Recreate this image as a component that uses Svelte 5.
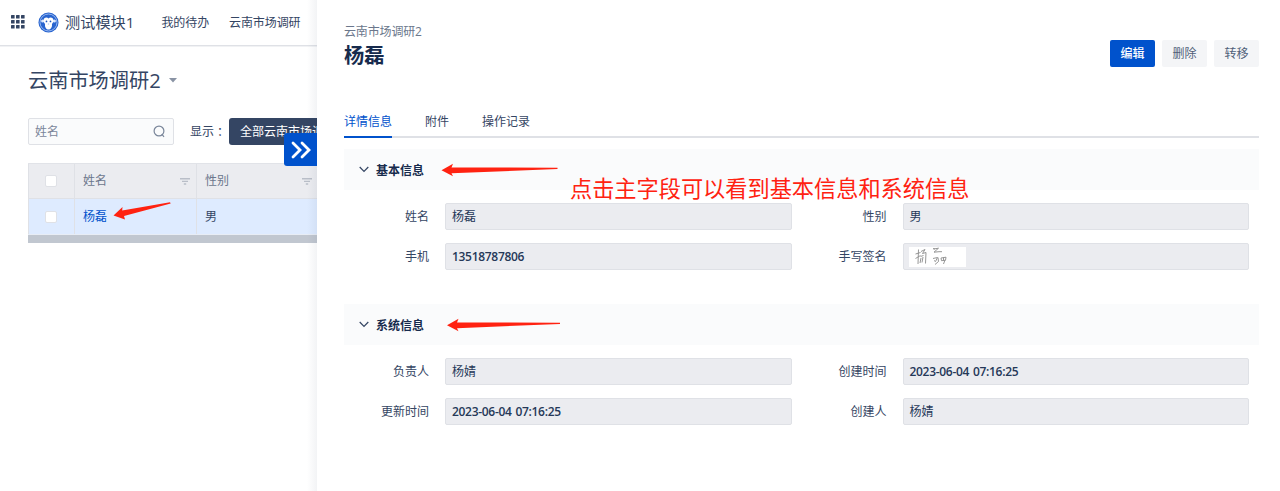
<script lang="ts">
	type Field = { label: string; value?: string; signature?: boolean };
	type Section = { title: string; fields: Field[] };

	const navItems = ['我的待办', '云南市场调研'];
	const tabs = ['详情信息', '附件', '操作记录'];

	let activeTab = $state('详情信息');
	let checked = $state(false);

	const sections: Section[] = [
		{
			title: '基本信息',
			fields: [
				{ label: '姓名', value: '杨磊' },
				{ label: '性别', value: '男' },
				{ label: '手机', value: '13518787806' },
				{ label: '手写签名', signature: true }
			]
		},
		{
			title: '系统信息',
			fields: [
				{ label: '负责人', value: '杨婧' },
				{ label: '创建时间', value: '2023-06-04 07:16:25' },
				{ label: '更新时间', value: '2023-06-04 07:16:25' },
				{ label: '创建人', value: '杨婧' }
			]
		}
	];

	const isNumeric = (value = '') => /^\d/.test(value);
</script>

{#snippet filterIcon()}
	<svg class="filter" width="10" height="7" viewBox="0 0 10 7">
		<path d="M0 .8h10M2 3.4h6M3.8 6h2.4" stroke="#b9bec8" stroke-width="1.4" />
	</svg>
{/snippet}

<div class="app">
	<div class="list-page">
		<header class="topbar">
			<svg class="apps" width="14" height="14" viewBox="0 0 14 14" fill="#344563">
				{#each [0, 5, 10] as y}
					{#each [0, 5, 10] as x}
						<rect {x} {y} width="3.6" height="3.6" rx="0.5" />
					{/each}
				{/each}
			</svg>
			<svg class="logo" width="21" height="21" viewBox="0 0 22 22">
				<circle cx="11" cy="11" r="10.5" fill="#2864cf" />
				<circle cx="11" cy="11" r="8.9" fill="none" stroke="#a9c5f4" stroke-width="0.9" />
				<circle cx="4.8" cy="9.5" r="1.6" fill="#dce8fc" />
				<circle cx="17.2" cy="9.5" r="1.6" fill="#dce8fc" />
				<path
					d="M11 6.8C9.3 4.700 5.500 6 5.700 9.200c.1 1.700 1.400 2.500 1.700 3.800-.5 2.900 1.400 5.400 3.600 5.400s4.100-2.500 3.600-5.400c.3-1.300 1.600-2.100 1.700-3.800.2-3.200-3.600-4.500-5.300-2.400z"
					fill="#fff"
				/>
				<circle cx="8.9" cy="9.9" r="0.9" fill="#1d55bd" />
				<circle cx="13.1" cy="9.9" r="0.9" fill="#1d55bd" />
				<path d="M10.300 12.600h1.400" stroke="#7fa5e8" stroke-width="0.8" />
			</svg>
			<span class="module">测试模块1</span>
			<nav>
				{#each navItems as item}
					<span>{item}</span>
				{/each}
			</nav>
		</header>

		<h1>
			云南市场调研2
			<svg width="8" height="5" viewBox="0 0 8 5"><path d="M0 0h8L4 4.500z" fill="#8993a4" /></svg>
		</h1>

		<div class="toolbar">
			<div class="search">
				<span>姓名</span>
				<svg width="13" height="13" viewBox="0 0 13 13" fill="none" stroke="#7a869a" stroke-width="1.2">
					<circle cx="6" cy="6" r="4.900" />
					<path d="M8.800 9.200l2.200 2.600" />
				</svg>
			</div>
			<span class="show">显示<span class="colon">：</span></span>
			<div class="view">全部云南市场调研2</div>
		</div>

		<div class="table">
			<div class="row head">
				<div class="cell check"><span class="box"></span></div>
				<div class="cell">姓名{@render filterIcon()}</div>
				<div class="cell">性别{@render filterIcon()}</div>
			</div>
			<div class="row body">
				<div class="cell check">
					<button class="box" class:checked aria-label="选择" onclick={() => (checked = !checked)}></button>
				</div>
				<div class="cell link">杨磊</div>
				<div class="cell">男</div>
			</div>
			<div class="scrollbar"></div>
		</div>

		<div class="shade"></div>
		<button class="collapse" aria-label="收起">
			<svg width="20" height="18" viewBox="0 0 20 18" fill="none" stroke="#fff" stroke-width="2.800" stroke-linecap="round">
				<path d="M2 2l7 7-7 7M11 2l7 7-7 7" />
			</svg>
		</button>
	</div>

	<main class="panel">
		<div class="heading">
			<div>
				<div class="crumb">云南市场调研2</div>
				<h2>杨磊</h2>
			</div>
			<div class="actions">
				<button class="primary">编辑</button>
				<button>删除</button>
				<button>转移</button>
			</div>
		</div>

		<div class="tabs">
			{#each tabs as tab}
				<button class:active={tab === activeTab} onclick={() => (activeTab = tab)}>{tab}</button>
			{/each}
		</div>

		{#each sections as section}
			<section>
				<h3>
					<svg width="10" height="7" viewBox="0 0 10 7" fill="none" stroke="#344563" stroke-width="1.200">
						<path d="M.7 1L5 5.500 9.300 1" />
					</svg>
					{section.title}
				</h3>
				<div class="fields">
					{#each section.fields as field}
						<div class="field">
							<span class="label">{field.label}</span>
							<div class="value" class:numeric={isNumeric(field.value)}>
								{#if field.signature}
									<svg class="signature" width="57" height="20" viewBox="0 0 57 20" fill="none" stroke="#8b8b8b" stroke-width="0.900">
										<rect width="57" height="20" fill="#fff" stroke="none" />
										<path d="M6.500 7l5-1.500M9.500 2.500L9 17M6.500 11.500l5-3M12 4.500l4-2-2.500 4 3.500-1-.5 11M11.500 9.500l3-1M12 11l-1 5M14 10l-1 5.500" />
										<path d="M24.500 2l5-.8-4.500 4 5-.5h3M24 1.500l2 .5" />
										<path d="M24 11.500l4.500-1-2 4M29 10.500l.5 4-3.500 3M25 13.500l1.500 1M32 11l5-.8-.5 3-4 .5zM34.500 10.500v3M36 13l-1.500 4" />
									</svg>
								{:else}
									{field.value}
								{/if}
							</div>
						</div>
					{/each}
				</div>
			</section>
		{/each}
	</main>

	<!-- Tutorial annotations laid over the page -->
	<svg class="arrows" width="1280" height="491" viewBox="0 0 1280 491" fill="#ff2211">
		<path d="M113.500 215.500L122.500 207l-.3 3.500L170 202.300l.700 1.200L124 216l1 3.500z" />
		<path d="M441.500 170.300L453 163.700l-1.500 3.700 106 .4v1.200l-106 4.200 1.500 3z" />
		<path d="M447 325.300L458.500 318.700l-1.500 3.700 103 .4v1.200l-103 4.200 1.500 3z" />
	</svg>
	<div class="note">点击主字段可以看到基本信息和系统信息</div>
</div>

<style>
	:global(body) {
		background: #fff;
	}

	.app {
		position: relative;
		display: grid;
		grid-template-columns: 317px 1fr;
		height: 491px;
		overflow: hidden;
		font-family: 'Open Sans', 'Noto Sans CJK SC', sans-serif;
		font-size: 12px;
		line-height: 18px;
		color: #344563;
	}

	h1,
	h2,
	h3 {
		margin: 0;
		font-weight: 400;
	}

	button {
		border: 0;
		padding: 0;
		font: inherit;
		color: inherit;
		background: none;
	}

	/* List page */
	.list-page {
		position: relative;
		overflow: hidden;
		white-space: nowrap;
	}

	.topbar {
		display: flex;
		align-items: center;
		height: 46px;
		padding: 0 0 1px 11px;
		box-sizing: border-box;
		border-bottom: 1px solid #dfe1e6;
		box-shadow: 0 1px 0 #f1f2f4;
	}

	.logo {
		margin: 0 6px 0 13px;
	}

	.module {
		font-size: 15.2px;
	}

	nav {
		display: flex;
		gap: 20px;
		margin-left: 27px;
		padding-top: 1px;
		letter-spacing: -0.1px;
	}

	h1 {
		display: flex;
		align-items: center;
		gap: 8px;
		margin: 19px 0 0 28px;
		font-size: 20.2px;
		line-height: 30px;
	}

	.toolbar {
		display: flex;
		align-items: center;
		margin: 23px 0 0 28px;
	}

	.search {
		display: flex;
		flex: none;
		align-items: center;
		justify-content: space-between;
		width: 146px;
		height: 27px;
		padding: 0 7px 0 6px;
		box-sizing: border-box;
		border: 1px solid #dfe1e6;
		border-radius: 2px;
		background: #fafbfc;
		color: #7a869a;
	}

	.show {
		flex: none;
		width: 39px;
		margin-left: 16px;
	}

	.colon {
		margin-left: 3px;
	}

	.view {
		height: 27px;
		padding: 0 11px;
		border-radius: 3px;
		background: #344563;
		color: #fff;
		line-height: 27px;
	}

	.table {
		width: 400px;
		margin: 18px 0 0 28px;
	}

	.row {
		display: grid;
		grid-template-columns: 47px 122px 122px 109px;
	}

	.cell {
		display: flex;
		align-items: center;
		justify-content: space-between;
		padding: 0 6px 0 8px;
		border-right: 1px solid #dfe1e6;
	}

	.check {
		justify-content: center;
		padding: 0 2px 0 0;
	}

	.head {
		height: 34px;
		border-top: 1px solid #e1e3e8;
		background: #ebecf0;
		color: #6b778c;
	}

	.body {
		height: 35px;
		border-top: 1px solid #dfe1e6;
		border-bottom: 1px solid #e8edf5;
		background: #deebff;
	}

	.row .cell:first-child {
		border-left: 1px solid #dfe1e6;
	}

	.box {
		width: 12px;
		height: 12px;
		box-sizing: border-box;
		border: 1px solid #dfe1e6;
		border-radius: 2px;
		background: #fff;
	}

	.box.checked {
		background: #0052cc;
	}

	.link {
		color: #0052cc;
	}

	.scrollbar {
		height: 8px;
		background: #c1c7d0;
	}

	.shade {
		position: absolute;
		top: 0;
		right: 0;
		bottom: 0;
		width: 10px;
		background: linear-gradient(to right, rgba(9, 30, 66, 0), rgba(9, 30, 66, 0.05));
	}

	.collapse {
		position: absolute;
		top: 133px;
		right: 0;
		display: flex;
		align-items: center;
		justify-content: center;
		width: 33px;
		height: 33px;
		border-radius: 3px 0 0 3px;
		background: #0052cc;
	}

	/* Detail panel */
	.panel {
		padding: 23px 21px 0 27px;
		background: #fff;
	}

	.heading {
		display: flex;
		justify-content: space-between;
		height: 84px;
	}

	.crumb {
		color: #6b778c;
		letter-spacing: -0.15px;
	}

	h2 {
		margin-top: 1px;
		color: #172b4d;
		font-size: 20.2px;
		font-weight: 700;
		line-height: 26px;
	}

	.actions {
		display: flex;
		gap: 7px;
		margin-top: 17px;
	}

	.actions button {
		width: 45px;
		height: 27px;
		padding-top: 1px;
		border-radius: 2px;
		background: #f4f5f7;
		color: #505f79;
	}

	.actions .primary {
		background: #0052cc;
		color: #fff;
		font-weight: 500;
	}

	.tabs {
		display: flex;
		gap: 33px;
		height: 29px;
		border-bottom: 2px solid #dfe1e6;
	}

	.tabs button {
		height: 31px;
		border-bottom: 2px solid transparent;
	}

	.tabs .active {
		border-color: #0052cc;
		color: #0052cc;
	}

	section {
		margin-top: 11px;
		height: 144px;
	}

	h3 {
		display: flex;
		align-items: center;
		gap: 7px;
		height: 41px;
		padding: 2px 0 0 15px;
		box-sizing: border-box;
		background: #fafbfc;
		color: #172b4d;
		font-size: 12px;
		font-weight: 700;
	}

	h3 svg {
		margin-bottom: 2px;
	}

	.fields {
		display: grid;
		grid-template-columns: 1fr 1fr;
		row-gap: 13px;
		padding-top: 13px;
	}

	.field {
		display: flex;
		align-items: center;
	}

	.label {
		width: 85px;
		margin-right: 16px;
		text-align: right;
	}

	.value {
		display: flex;
		flex: 1;
		align-items: center;
		height: 27px;
		margin-right: 10px;
		padding: 0 6px;
		box-sizing: border-box;
		border: 1px solid #dfe1e6;
		border-radius: 2px;
		background: #ebecf0;
		color: #253858;
	}

	.signature {
		margin-left: -1px;
	}

	.numeric {
		font-weight: 600;
		letter-spacing: -0.3px;
		word-spacing: 1px;
		white-space: pre;
	}

	/* Annotations */
	.arrows {
		position: absolute;
		top: 0;
		left: 0;
		pointer-events: none;
	}

	.note {
		position: absolute;
		top: 172px;
		left: 570px;
		color: #ff2211;
		font-family: 'Noto Sans CJK SC', sans-serif;
		font-size: 22.2px;
		font-weight: 400;
		line-height: 30px;
		white-space: nowrap;
	}
</style>
